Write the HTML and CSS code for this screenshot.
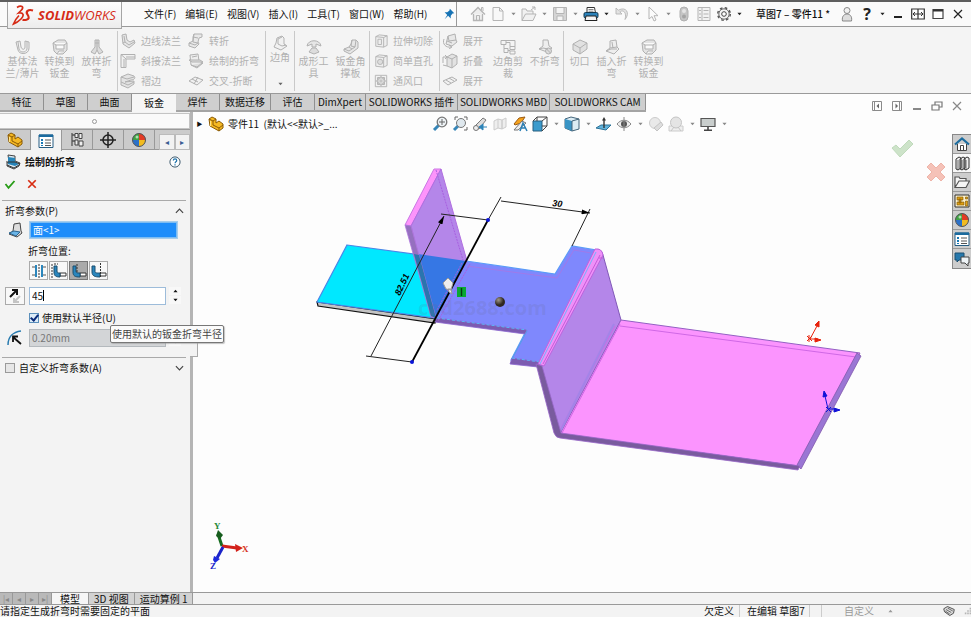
FILE: index.html
```html
<!DOCTYPE html>
<html lang="zh-CN">
<head>
<meta charset="utf-8">
<title>SOLIDWORKS</title>
<link rel="stylesheet" href="styles.css">
</head>
<body>
<svg class="sprite" aria-hidden="true">
  <symbol id="caret" viewBox="0 0 6 4"><path d="M0.5 0.5h5L3 3.5z" fill="currentColor"/></symbol>
  <symbol id="pin" viewBox="0 0 16 16"><path d="M9 2l5 5-2 .5-2 2.500 0 3-3-3-4 4 3-5-3-3 3 0 2.500-2z" fill="#1673b5"/></symbol>
  <symbol id="home" viewBox="0 0 16 16"><path d="M3.500 8v6.500h9V8M1 8.500l7-7 7 7" fill="#ededed" stroke="currentColor" stroke-width="1.300"/><path d="M6.500 14V9.500h3V14M11.500 4V1.500h1.500V5" fill="none" stroke="currentColor"/></symbol>
  <symbol id="doc" viewBox="0 0 16 16"><path d="M3 1.500h6.500L13 5v9.500H3zM9.500 1.500V5H13" fill="#f8f8f8" stroke="currentColor"/></symbol>
  <symbol id="open" viewBox="0 0 16 16"><path d="M1 14.500V3h4l1 2h6v3M1 14.500L4.500 8H15l-3 6.500zM10 4l4-3M11 1h3v3" fill="#f1f1f1" stroke="currentColor"/></symbol>
  <symbol id="save" viewBox="0 0 16 16"><path d="M1.500 1.500h13v13h-13z" fill="#d5d5d5" stroke="currentColor"/><path d="M4 1.500h8v6H4zM5 10h6v4.500H5z" fill="#f4f4f4" stroke="currentColor"/></symbol>
  <symbol id="print" viewBox="0 0 16 16"><path d="M4 7V1.500h7.500L12.500 7" fill="#fff" stroke="#333"/><rect x="1" y="6.500" width="14" height="5.500" rx="1.500" fill="#2b82ba" stroke="#14394f"/><path d="M3 10h10l1 4.500H2z" fill="#f5f5f5" stroke="#222"/><path d="M5.500 3.500h5M5.500 5.200h5" stroke="#666" stroke-width=".8"/></symbol>
  <symbol id="undo" viewBox="0 0 16 16"><path d="M2 2v6h6L5.800 5.800C9 3.500 13 6 11 13.500 16.500 7 12 0 4.300 4.200z" fill="#e3e3e3" stroke="currentColor" stroke-width=".9"/></symbol>
  <symbol id="cursor" viewBox="0 0 16 16"><path d="M4 1v12l3-2.500 2 4.500 2-1-2-4.300h4z" fill="#fbfbfb" stroke="currentColor"/></symbol>
  <symbol id="traffic" viewBox="0 0 16 16"><rect x="4" y="1" width="8" height="14" rx="4" fill="#c4c4c4" stroke="#b0b0b0"/><circle cx="8" cy="5" r="2" fill="#e4e4e4"/><circle cx="8" cy="10.500" r="2" fill="#a4a4a4"/></symbol>
  <symbol id="list" viewBox="0 0 16 16"><path d="M2 1.500h12v13H2zM6 1.500v13M3 4.500h2M3 8h2M3 11.500h2M7.500 4.500h5M7.500 8h5M7.500 11.500h5" fill="#f2f2f2" stroke="currentColor"/></symbol>
  <symbol id="gear" viewBox="0 0 16 16"><circle cx="8" cy="8" r="6.300" fill="none" stroke="#555" stroke-width="1.400" stroke-dasharray="2.600 2.350"/><circle cx="8" cy="8" r="5.200" fill="#f5f5f5" stroke="#555" stroke-width=".9"/><circle cx="8" cy="8" r="2.300" fill="#fff" stroke="#444"/></symbol>
  <symbol id="user" viewBox="0 0 16 16"><circle cx="8" cy="4.500" r="3" fill="#f1f1f1" stroke="#888"/><path d="M3.500 15c-1-5 2-7 4.500-7s5.500 2 4.500 7z" fill="#ddd" stroke="#888"/></symbol>
  <symbol id="bend" viewBox="0 0 16 16"><path d="M2 2l4-1 1 6 3 2 4-2 1 3-6 5-6-4z" fill="#e6e6e6" stroke="currentColor"/><path d="M4 3l1 6 4 3 5-3M5 9l-2 1" fill="none" stroke="currentColor"/></symbol>
  <symbol id="gusset" viewBox="0 0 16 16"><path d="M9 1h4l2 2v6l-8 6-6-3v-2l5-2 2-3z" fill="#e6e6e6" stroke="currentColor"/><path d="M13 1l-1 7-6 4-5-2M9 1L8 7l4 1M6 8l3 2" fill="none" stroke="currentColor"/></symbol>
  <symbol id="ushape" viewBox="0 0 16 16"><path d="M1 3l4-1 1 6c1 3 4 3 4 0V2l4 1v6c0 7-10 7-11 2z" fill="#f3f3f3" stroke="currentColor"/><path d="M3 3l1 7c1 4 7 4 8 0V3" fill="none" stroke="currentColor"/></symbol>
  <symbol id="convert" viewBox="0 0 16 16"><path d="M1 4l5-3h7l2 3v7l-4 4H5l-3-3z" fill="#e3e3e3" stroke="currentColor"/><path d="M1 4l3 2h8l3-2M4 6v4h8V6M5 15l2-3h5" fill="#fafafa" stroke="currentColor"/></symbol>
  <symbol id="loft" viewBox="0 0 16 16"><path d="M6 1h4v7l4 5-4 2-2-4-2 4-4-2 4-5z" fill="#ddd" stroke="currentColor"/><path d="M8 1v10M6 4h4" stroke="currentColor"/></symbol>
  <symbol id="miter" viewBox="0 0 16 16"><path d="M1 1.500h14V6H6v8.500H1zM1 1.500L6 6M4 6v8M6 4h9" fill="#f1f1f1" stroke="currentColor"/></symbol>
  <symbol id="hem" viewBox="0 0 16 16"><path d="M1 4l7-3 6 2c2 2 0 4-3 4L5 9l9-1v3l-6 4-7-3z" fill="#e3e3e3" stroke="currentColor"/><path d="M1 4l6 2 7-2M1 9l7 3 6-3" fill="none" stroke="currentColor"/></symbol>
  <symbol id="jog" viewBox="0 0 16 16"><path d="M6 1h8v3l-3 1-1 4 1 2-4 4-6-2v-3l4-2z" fill="#e8e8e8" stroke="currentColor"/><path d="M6 1l-1 3 5 1M5 4v5l5 1M1 10l6 2 3-2" fill="none" stroke="currentColor"/></symbol>
  <symbol id="unfold" viewBox="0 0 16 16"><path d="M6 3l7-2 1 6 1 2-5 4-6-2z" fill="#e8e8e8" stroke="currentColor"/><path d="M6 3l1 5 7-1M2 6c-2 5 2 9 7 8M7 12l3 2-3 2M5 8l5 2" fill="none" stroke="currentColor"/></symbol>
  <symbol id="fold" viewBox="0 0 16 16"><path d="M5 4l5-3 5 2v8l-5 4-5-2z" fill="#e2e2e2" stroke="currentColor"/><path d="M5 4l5 2v9M10 6l5-3M1 10V4h4M3 2l2 2-2 2M1 12l4 1" fill="none" stroke="currentColor"/></symbol>
  <symbol id="sketchbend" viewBox="0 0 16 16"><path d="M2 2l8-1 1 7 4 2-6 5-6-3z" fill="#eee" stroke="currentColor"/><path d="M1 7h11l3 2H4zM3 12l6 2 5-4M4 4l5-1" fill="#ddd" stroke="currentColor"/></symbol>
  <symbol id="cross" viewBox="0 0 16 16"><path d="M1 8l6-4 8 3-6 5zM4 6l6 3M6 11l4-7" fill="#f1f1f1" stroke="currentColor"/></symbol>
  <symbol id="corner" viewBox="0 0 16 16"><path d="M4 8l1-5 5-2 2 2v6l3 2-6 4-7-3z" fill="#f1f1f1" stroke="currentColor"/><path d="M6 9V4l4-2M6 9l4 2 4-1" fill="none" stroke="currentColor"/></symbol>
  <symbol id="form" viewBox="0 0 16 16"><path d="M1 7c1-7 13-7 14 0l-5-2v3H6V5z" fill="#e6e6e6" stroke="currentColor"/><path d="M6 9h4l3 4-5 2-5-2z" fill="#ddd" stroke="currentColor"/></symbol>
  <symbol id="cut" viewBox="0 0 16 16"><path d="M2 3l4-2 9 1v11l-4 2-9-1z" fill="#eee" stroke="currentColor"/><path d="M2 3l9 1v11M11 4l4-2M4.500 6h4v6h-4z" fill="none" stroke="currentColor"/></symbol>
  <symbol id="hole" viewBox="0 0 16 16"><path d="M2 3l4-2 9 1v11l-4 2-9-1z" fill="#eee" stroke="currentColor"/><path d="M2 3l9 1v11M11 4l4-2" fill="none" stroke="currentColor"/><circle cx="7" cy="9" r="3" fill="#ddd" stroke="currentColor"/></symbol>
  <symbol id="vent" viewBox="0 0 16 16"><path d="M1.500 1.500h13v13h-13z" fill="#f1f1f1" stroke="currentColor"/><circle cx="8" cy="8" r="4.500" fill="none" stroke="currentColor"/><path d="M4 4h2v2H4zM10 4h2v2h-2zM4 10h2v2H4zM10 10h2v2h-2zM8 2v12M2 8h12" fill="#ccc" stroke="currentColor"/></symbol>
  <symbol id="flat" viewBox="0 0 16 16"><path d="M1 8l9-4 5 3-9 5zM4 7l5 3M7 5l5 3" fill="#f1f1f1" stroke="currentColor"/></symbol>
  <symbol id="trim" viewBox="0 0 16 16"><path d="M1 1.500h5v4H1zM6 1.500h9v6M4 5.500v4M4 9.500h4v4H4zM8 11.500h2M10 7.500h5v3h-5zM10 12h5v3h-5zM6 3.500h4v4" fill="none" stroke="currentColor"/></symbol>
  <symbol id="unbend" viewBox="0 0 16 16"><path d="M6 1h5l1 6 3 2-5 4-8-3 4-3z" fill="#eee" stroke="currentColor"/><circle cx="11.500" cy="12" r="3" fill="#ddd" stroke="currentColor"/><path d="M9.500 10l4 4M2 10l4-1 5 1" stroke="currentColor" fill="none"/></symbol>
  <symbol id="insbend" viewBox="0 0 16 16"><path d="M6 2l6-1 1 7 2 2-5 5-8-3 4-3z" fill="#eee" stroke="currentColor"/><path d="M2 12l5-2 6 0M6 9l7-1M8 3l1 6" fill="none" stroke="currentColor"/></symbol>
  <symbol id="rip" viewBox="0 0 16 16"><path d="M1 5l7-4 7 3v6l-7 5-7-4z" fill="#e1e1e1" stroke="currentColor"/><path d="M1 5l7 4 7-5M8 9v6" fill="none" stroke="currentColor"/></symbol>
  <symbol id="part" viewBox="0 0 16 16"><path d="M1 3l3-2 4 2v4l3-2 4 3v4l-4 3-9-5z" fill="#f6b923" stroke="#8a5b06"/><path d="M1 3l4 2v4l6 3 4-3M5 5l3-2M11 12v3" fill="none" stroke="#8a5b06"/><path d="M2.500 5v5" stroke="#ffe48a"/></symbol>
  <symbol id="props" viewBox="0 0 16 16"><path d="M1 2h14v12.500H1z" fill="#fff" stroke="#265d82"/><path d="M1 1.500h14V4H1z" fill="#1a6a9e"/><path d="M3 6h2v2H3zM3 9h2v2H3zM3 12h2v1H3z" fill="#1878b5"/><path d="M7 7h6M7 10h6M7 12.500h6" stroke="#555"/></symbol>
  <symbol id="config" viewBox="0 0 16 16"><path d="M3 1v13M3 3h3M3 9h3" fill="none" stroke="#555" stroke-width="1.300"/><path d="M6 1.500h3v4H6zM10 1.500h3v5h-3zM6 8h3v5H6zM10 9h4v5h-4z" fill="#eee" stroke="#444"/></symbol>
  <symbol id="target" viewBox="0 0 16 16"><circle cx="8" cy="8" r="5" fill="none" stroke="#222" stroke-width="1.500"/><path d="M8 0v16M0 8h16" stroke="#222" stroke-width="1.500"/></symbol>
  <symbol id="ball" viewBox="0 0 16 16"><circle cx="8" cy="8" r="6.500" fill="#2c71c8"/><path d="M8 8V1.500A6.500 6.500 0 0 0 1.500 8z" fill="#3fa342"/><path d="M8 8V1.500A6.500 6.500 0 0 1 14.500 8z" fill="#e23a24"/><path d="M8 8h6.500A6.500 6.500 0 0 1 8 14.500z" fill="#f2bb20"/><circle cx="8" cy="8" r="6.500" fill="none" stroke="#555"/><circle cx="6" cy="5" r="1.500" fill="#fff" opacity=".6"/></symbol>
  <symbol id="bendblue" viewBox="0 0 16 16"><path d="M3 1l7 1v5l5 2-1 3-5 3-7-3V9l2-1z" fill="#dce7ee" stroke="#444"/><path d="M3 3l7 1v4l4 2-4 2-7-2z" fill="#2784b8"/><path d="M2 11l7 3 5-3M1 8h9l5 2" fill="none" stroke="#333"/></symbol>
  <symbol id="face" viewBox="0 0 16 16"><path d="M7 2l6-1 1 8 1 2-5 4-8-3 4-3z" fill="#ddd" stroke="#444"/><path d="M2 11l5-2 6 1-4 4z" fill="#6ab5e8" stroke="#2b6590"/></symbol>
  <symbol id="help" viewBox="0 0 16 16"><circle cx="8" cy="8" r="6.800" fill="#fff" stroke="#3a566b" stroke-width="1.300"/><path d="M5.800 6c0-3 4.500-3 4.500 0 0 1.700-2.200 1.700-2.200 3.500M8 11v1.500" fill="none" stroke="#1d72ac" stroke-width="1.600"/></symbol>
  <symbol id="check" viewBox="0 0 16 16"><path d="M2 8l4 5 8-9" fill="none" stroke="#279c16" stroke-width="2.400"/></symbol>
  <symbol id="cancel" viewBox="0 0 16 16"><path d="M3 3l10 10M13 3L3 13" fill="none" stroke="#d82c12" stroke-width="2.300"/></symbol>
  <symbol id="chev" viewBox="0 0 10 6"><path d="M1 5l4-4 4 4" fill="none" stroke="#444" stroke-width="1.300"/></symbol>
  <symbol id="pos1" viewBox="0 0 16 16"><path d="M1 4h4v8H1M15 4h-4v8h4" fill="none" stroke="#555"/><path d="M5 2v12M11 2v12" stroke="#2a86bd" stroke-width="2"/><path d="M8 1v14" stroke="#333" stroke-dasharray="2 1"/></symbol>
  <symbol id="pos2" viewBox="0 0 16 16"><path d="M9 10h6v3H9z" fill="#fff" stroke="#333"/><path d="M3 3h3v5c0 2 1 2 3 2v4c-4 0-6-1-6-5z" fill="#2a86bd" stroke="#1b4d6c"/><path d="M1 1v14M3 1h4" stroke="#333" stroke-dasharray="2 1"/></symbol>
  <symbol id="pos3" viewBox="0 0 16 16"><path d="M9 10h6v3H9z" fill="#fff" stroke="#333"/><path d="M2 3h3v5c0 2 1 2 4 2v4c-5 0-7-1-7-5z" fill="#2a86bd" stroke="#1b4d6c"/><path d="M6 1v8" stroke="#333" stroke-dasharray="2 1"/></symbol>
  <symbol id="pos4" viewBox="0 0 16 16"><path d="M9 10h6v3H9z" fill="#fff" stroke="#333"/><path d="M1 3h3v5c0 2 1 2 5 2v4c-5 0-8-1-8-5z" fill="#2a86bd" stroke="#1b4d6c"/><path d="M9.500 0v15" stroke="#333" stroke-dasharray="2 1"/></symbol>
  <symbol id="flip" viewBox="0 0 16 16"><path d="M3 9l6-6M5 2h5v5" fill="none" stroke="#111" stroke-width="2"/><path d="M13 8l-5 5M7 10v4h5" fill="none" stroke="#c4c4c4" stroke-width="2"/></symbol>
  <symbol id="radius" viewBox="0 0 16 16"><path d="M1 15C1 7 6 2 14 1" fill="none" stroke="#2a7cb0" stroke-width="1.500"/><path d="M14 14L6 7M6 12V6.500h5" fill="none" stroke="#111" stroke-width="1.800"/></symbol>
  <symbol id="zoomfit" viewBox="0 0 16 16"><path d="M7 9l-5 5" stroke="#3786b8" stroke-width="3"/><circle cx="10" cy="6" r="4.800" fill="#eef3f6" stroke="#777" stroke-width="1.300"/><path d="M10 3v6M7 6h6" stroke="#666"/></symbol>
  <symbol id="zoomarea" viewBox="0 0 16 16"><path d="M6 10l-4 4" stroke="#3786b8" stroke-width="3"/><circle cx="9" cy="7" r="4.500" fill="#dfe8ee" stroke="#777"/><path d="M3 4V1h3M12 1h3v3M15 11v3h-3" fill="none" stroke="#666"/></symbol>
  <symbol id="prev" viewBox="0 0 16 16"><path d="M2 11l9-9 3 2-7 9z" fill="#ddd" stroke="#777"/><circle cx="4" cy="12" r="2.500" fill="#eee" stroke="#777"/><path d="M15 11H9M11 8l-4 3 4 3z" fill="#2d83b8" stroke="#2d83b8"/></symbol>
  <symbol id="section" viewBox="0 0 16 16"><path d="M2 5l4-2v9l-4 2zM6 3l4 1v9l-4-1M10 4l4-2v9l-4 2z" fill="#eee" stroke="#ccc"/></symbol>
  <symbol id="annot" viewBox="0 0 16 16"><path d="M2 8l5-6 6-1-4 6-6 2z" fill="#f5a21c" stroke="#9b5b12"/><path d="M2 14l8-9 4 2-8 7z" fill="#eee" stroke="#777"/><path d="M8 15l3-8 4 8M9 12h4" fill="none" stroke="#2b7fb5" stroke-width="1.500"/></symbol>
  <symbol id="view" viewBox="0 0 16 16"><path d="M1 5h9v10H1z" fill="#3b9bcd" stroke="#285f7e"/><path d="M1 5l4-4h10v9l-5 5M10 5l5-4M5 1v4M10 10h5" fill="none" stroke="#444"/></symbol>
  <symbol id="shade" viewBox="0 0 16 16"><path d="M1 3l6-2 8 2v10l-7 2-7-3z" fill="#dcecf4" stroke="#44657a"/><path d="M1 3l7 2v10l-7-3z" fill="#3994c5"/><path d="M8 5v10M8 5l7-2" stroke="#44657a" fill="none"/></symbol>
  <symbol id="normal" viewBox="0 0 16 16"><path d="M0 12l5-3h10l-5 5z" fill="#61b3dc" stroke="#2d7296"/><path d="M8 12V3" stroke="#333" stroke-width="1.400"/><path d="M6 4.500L8 1l2 3.500z" fill="#333"/></symbol>
  <symbol id="eye" viewBox="0 0 16 16"><path d="M1 8c4-5 10-5 14 0-4 5-10 5-14 0z" fill="#eee" stroke="#888"/><circle cx="8" cy="8" r="3" fill="#555"/><path d="M8 1v14" stroke="#888"/></symbol>
  <symbol id="appear" viewBox="0 0 16 16"><circle cx="7" cy="7" r="5.500" fill="#e9e9e9" stroke="#ccc"/><path d="M6 12l7-6 2 3-6 6z" fill="#ddd" stroke="#c4c4c4"/></symbol>
  <symbol id="scene" viewBox="0 0 16 16"><path d="M1 10h14v5H1z" fill="#eee" stroke="#ccc"/><circle cx="8" cy="6.500" r="5.500" fill="#e4e4e4" stroke="#c4c4c4"/><path d="M3 15l3-4M13 15l-3-4" stroke="#c4c4c4"/></symbol>
  <symbol id="monitor" viewBox="0 0 16 16"><path d="M1 2.500h14v8H1z" fill="#c9cecd" stroke="#555" stroke-width="1.200"/><path d="M8 11v3M4 14.300h8" stroke="#444" stroke-width="1.600"/></symbol>
  <symbol id="paneL" viewBox="0 0 12 12"><path d="M1.500 1.500h9v9h-9zM3.500 1.500v9" fill="none" stroke="#8a8a8a"/><path d="M8 3.500v5L5.500 6z" fill="#666"/></symbol>
  <symbol id="paneR" viewBox="0 0 12 12"><path d="M1.500 1.500h9v9h-9zM8.500 1.500v9" fill="none" stroke="#8a8a8a"/><path d="M4.500 3.500v5L7 6z" fill="#666"/></symbol>
  <symbol id="min" viewBox="0 0 12 12"><path d="M2 9h8" stroke="currentColor" stroke-width="2"/></symbol>
  <symbol id="restore" viewBox="0 0 12 12"><path d="M1 5h7v5H1zM4 5V2h7v5H8" fill="none" stroke="#777" stroke-width="1.200"/></symbol>
  <symbol id="close" viewBox="0 0 12 12"><path d="M2 2l8 8M10 2l-8 8" stroke="currentColor" stroke-width="1.200"/></symbol>
  <symbol id="span" viewBox="0 0 14 12"><path d="M.7 1h12.600v10H.7zM7 1v10" fill="#fff" stroke="#333" stroke-width="1.200"/><path d="M2 6h10M4 4L2 6l2 2M10 4l2 2-2 2" fill="none" stroke="#333"/></symbol>
  <symbol id="max" viewBox="0 0 12 12"><path d="M1 1.500h10v9H1z" fill="#fff" stroke="#444" stroke-width="1.200"/><path d="M1 2.500h10" stroke="#333" stroke-width="2"/></symbol>
  <symbol id="books" viewBox="0 0 16 16"><path d="M2 4l3-2 2 1v10l-3 2-2-1zM6 4l3-2 2 1v10l-3 2-2-1zM10 4l3-2 2 1v10l-3 2-2-1z" fill="#eee" stroke="#333"/><path d="M4 5v10M8 5v10M12 5v10" stroke="#333" stroke-width=".7"/></symbol>
  <symbol id="homeblue" viewBox="0 0 16 16"><path d="M3.500 8v6.500h9V8" fill="#fff" stroke="#444"/><path d="M1 8.500l7-6 7 6" fill="none" stroke="#1c6c9e" stroke-width="2.200"/><path d="M6.500 14V9.500h3V14" fill="none" stroke="#444"/></symbol>
  <symbol id="folder" viewBox="0 0 16 16"><path d="M1 13.500V3h4l1 1.500h6V7M1 13.500L5 7h10.500L12 13.500z" fill="#f5f5f5" stroke="#555" stroke-width="1.200"/></symbol>
  <symbol id="palette" viewBox="0 0 16 16"><path d="M1 2h14v12H1z" fill="#fff3cc" stroke="#333"/><path d="M3 4h6v3H3zM3 9h7v3H3zM5 6h2v4H5zM11.500 4h2v2h-2zM11.500 8h2v5h-2z" fill="#e0a010" stroke="#765006" stroke-width=".6"/></symbol>
  <symbol id="chat" viewBox="0 0 16 16"><path d="M1 2h9v7H5l-2 2V9H1z" fill="#2678ac" stroke="#1b4e70"/><path d="M7 6h8v6h-1v3l-3-3H7z" fill="#eef3f6" stroke="#444"/></symbol>
  <symbol id="tag" viewBox="0 0 16 16"><path d="M1 5l5-3 9 4-1 5-5 3-7-5z" fill="#ddd" stroke="#444" stroke-width="1.200"/><path d="M4 6l7 4M6 4l7 4M3 8l6 4" stroke="#444"/></symbol>
  <symbol id="grip" viewBox="0 0 10 10"><path d="M7 1h2v2H7zM4 4h2v2H4zM7 4h2v2H7zM1 7h2v2H1zM4 7h2v2H4zM7 7h2v2H7z" fill="#b5b5b5"/></symbol>
</svg>

<div class="app">
  <header class="titlebar">
    <div class="logo">
      <svg class="ds" viewBox="0 0 24 22" aria-hidden="true"><path d="M5 3.500C9 1 13 2.500 9 6.500L6.500 9c5-1 6 2.500 2.500 6-2 2-5 4-7.500 5 1.500-3.500 3-6 5.500-8.500" fill="none" stroke="#d62b16" stroke-width="1.700"/><path d="M21 6.500c-5-1.500-7.500 1-5.500 4s1.500 4.500-1 5.200c-1.500.4-3 .3-4 0" fill="none" stroke="#d62b16" stroke-width="2.200"/></svg>
      <span class="brand"><b>SOLID</b>WORKS</span>
    </div>
    <nav class="menu">
      <button>文件(F)</button><button>编辑(E)</button><button>视图(V)</button><button>插入(I)</button><button>工具(T)</button><button>窗口(W)</button><button>帮助(H)</button>
    </nav>
    <button class="pin" aria-label="固定"><svg class="i14"><use href="#pin"/></svg></button>
    <div class="quick">
      <button class="ib" aria-label="主页"><svg class="i16"><use href="#home"/></svg></button>
      <button class="ib" aria-label="新建"><svg class="i16"><use href="#doc"/></svg></button><button class="cb" aria-label="新建选项"><svg><use href="#caret"/></svg></button>
      <button class="ib" aria-label="打开"><svg class="i16"><use href="#open"/></svg></button><button class="cb" aria-label="打开选项"><svg><use href="#caret"/></svg></button>
      <button class="ib" aria-label="保存"><svg class="i16"><use href="#save"/></svg></button><button class="cb" aria-label="保存选项"><svg><use href="#caret"/></svg></button>
      <button class="ib" aria-label="打印"><svg class="i16"><use href="#print"/></svg></button><button class="cb dark" aria-label="打印选项"><svg><use href="#caret"/></svg></button>
      <button class="ib" aria-label="撤消"><svg class="i16"><use href="#undo"/></svg></button><button class="cb" aria-label="撤消选项"><svg><use href="#caret"/></svg></button>
      <button class="ib" aria-label="选择"><svg class="i16"><use href="#cursor"/></svg></button><button class="cb" aria-label="选择选项"><svg><use href="#caret"/></svg></button>
      <button class="ib" aria-label="重建"><svg class="i16"><use href="#traffic"/></svg></button>
      <button class="ib" aria-label="文件属性"><svg class="i16"><use href="#list"/></svg></button>
      <button class="ib" aria-label="选项"><svg class="i16"><use href="#gear"/></svg></button><button class="cb dark" aria-label="更多选项"><svg><use href="#caret"/></svg></button>
    </div>
    <h1 class="doctitle">草图7 – 零件11 *</h1>
    <div class="winctl">
      <button class="ib" aria-label="登录"><svg class="i16"><use href="#user"/></svg></button>
      <button class="ib q">?</button><button class="cb dark" aria-label="帮助选项"><svg><use href="#caret"/></svg></button>
      <button class="ib" aria-label="最小化"><svg class="i12"><use href="#min"/></svg></button>
      <button class="ib" aria-label="跨屏"><svg class="i14"><use href="#span"/></svg></button>
      <button class="ib" aria-label="最大化"><svg class="i12"><use href="#max"/></svg></button>
      <button class="ib" aria-label="关闭"><svg class="i12"><use href="#close"/></svg></button>
    </div>
  </header>

  <section class="ribbon">
    <div class="grp g1">
      <button class="big"><svg class="i16"><use href="#ushape"/></svg>基体法<br>兰/薄片</button>
      <button class="big"><svg class="i16"><use href="#convert"/></svg>转换到<br>钣金</button>
      <button class="big"><svg class="i16"><use href="#loft"/></svg>放样折<br>弯</button>
    </div>
    <div class="grp g2">
      <div class="rows">
        <button><svg class="i16"><use href="#bend"/></svg>边线法兰</button>
        <button><svg class="i16"><use href="#miter"/></svg>斜接法兰</button>
        <button><svg class="i16"><use href="#hem"/></svg>褶边</button>
      </div>
      <div class="rows">
        <button><svg class="i16"><use href="#jog"/></svg>转折</button>
        <button><svg class="i16"><use href="#sketchbend"/></svg>绘制的折弯</button>
        <button><svg class="i16"><use href="#cross"/></svg>交叉-折断</button>
      </div>
    </div>
    <div class="grp g3">
      <button class="big tall"><svg class="i16"><use href="#corner"/></svg>边角<svg class="car"><use href="#caret"/></svg></button>
    </div>
    <div class="grp g4">
      <button class="big"><svg class="i16"><use href="#form"/></svg>成形工<br>具</button>
      <button class="big"><svg class="i16"><use href="#gusset"/></svg>钣金角<br>撑板</button>
    </div>
    <div class="grp g5">
      <div class="rows">
        <button><svg class="i14"><use href="#cut"/></svg>拉伸切除</button>
        <button><svg class="i14"><use href="#hole"/></svg>简单直孔</button>
        <button><svg class="i14"><use href="#vent"/></svg>通风口</button>
      </div>
    </div>
    <div class="grp g6">
      <div class="rows">
        <button><svg class="i16"><use href="#unfold"/></svg>展开</button>
        <button><svg class="i16"><use href="#fold"/></svg>折叠</button>
        <button><svg class="i16"><use href="#flat"/></svg>展开</button>
      </div>
      <button class="big"><svg class="i16"><use href="#trim"/></svg>边角剪<br>裁</button>
      <button class="big"><svg class="i16"><use href="#unbend"/></svg>不折弯</button>
    </div>
    <div class="grp g7">
      <button class="big"><svg class="i16"><use href="#rip"/></svg>切口</button>
      <button class="big"><svg class="i16"><use href="#insbend"/></svg>插入折<br>弯</button>
      <button class="big"><svg class="i16"><use href="#convert"/></svg>转换到<br>钣金</button>
    </div>
  </section>

  <div class="tabrow">
    <nav class="tabs">
      <button>特征</button><button>草图</button><button>曲面</button><button class="on">钣金</button><button>焊件</button><button class="m">数据迁移</button><button>评估</button><button class="m">DimXpert</button><button class="l">SOLIDWORKS 插件</button><button class="l">SOLIDWORKS MBD</button><button class="l xl">SOLIDWORKS CAM</button>
    </nav>
    <div class="docctl">
      <button class="ib" aria-label="左窗格"><svg class="i12"><use href="#paneL"/></svg></button>
      <button class="ib" aria-label="右窗格"><svg class="i12"><use href="#paneR"/></svg></button>
      <button class="ib" aria-label="最小化文档"><svg class="i12"><use href="#min"/></svg></button>
      <button class="ib" aria-label="还原文档"><svg class="i12"><use href="#restore"/></svg></button>
      <button class="ib" aria-label="关闭文档"><svg class="i12"><use href="#close"/></svg></button>
    </div>
  </div>

  <main class="work">
    <aside class="panel">
      <div class="grab"><i></i></div>
      <nav class="ptabs">
        <button aria-label="设计树"><svg class="i16"><use href="#part"/></svg></button>
        <button class="on" aria-label="属性"><svg class="i16"><use href="#props"/></svg></button>
        <button aria-label="配置"><svg class="i16"><use href="#config"/></svg></button>
        <button aria-label="尺寸专家"><svg class="i16"><use href="#target"/></svg></button>
        <button aria-label="外观"><svg class="i16"><use href="#ball"/></svg></button>
        <span class="pnav"><button aria-label="向左">◂</button><button aria-label="向右">▸</button></span>
      </nav>
      <div class="ptitle"><svg class="i16"><use href="#bendblue"/></svg><h2>绘制的折弯</h2><button aria-label="帮助"><svg class="i12"><use href="#help"/></svg></button></div>
      <div class="okrow"><button aria-label="确定"><svg class="i12"><use href="#check"/></svg></button><button aria-label="取消"><svg class="i12"><use href="#cancel"/></svg></button></div>
      <section class="params">
        <div class="sechead"><h3>折弯参数(P)</h3><svg class="chev"><use href="#chev"/></svg></div>
        <div class="prow"><span class="lead"><svg class="i16"><use href="#face"/></svg></span><input class="sel" aria-label="固定面" value="面&lt;1&gt;"></div>
        <p class="lab">折弯位置:</p>
        <div class="pos">
          <button aria-label="折弯中心线"><svg class="i16"><use href="#pos1"/></svg></button><button aria-label="材料在内"><svg class="i16"><use href="#pos2"/></svg></button><button class="on" aria-label="材料在外"><svg class="i16"><use href="#pos3"/></svg></button><button aria-label="折弯在外"><svg class="i16"><use href="#pos4"/></svg></button>
        </div>
        <div class="prow angle"><button class="flip" aria-label="反向"><svg class="i16"><use href="#flip"/></svg></button><span class="field"><input class="txt" aria-label="角度" value="45"><i class="textcaret"></i></span><span class="spin"><button aria-label="增大"><svg class="up"><use href="#caret"/></svg></button><button aria-label="减小"><svg><use href="#caret"/></svg></button></span></div>
        <label class="chk in"><input type="checkbox" checked><span>使用默认半径(U)</span></label>
        <div class="prow"><span class="lead"><svg class="i16"><use href="#radius"/></svg></span><input class="txt" aria-label="半径" value="0.20mm" disabled><span class="spin"><button aria-label="增大半径"><svg class="up"><use href="#caret"/></svg></button><button aria-label="减小半径"><svg><use href="#caret"/></svg></button></span></div>
      </section>
      <section class="custom">
        <label class="chk"><input type="checkbox"><span>自定义折弯系数(A)</span></label><svg class="chev down"><use href="#chev"/></svg>
      </section>
      <div class="tip" role="tooltip">使用默认的钣金折弯半径</div>
      <i class="handle"></i>
    </aside>

    <section class="view">
      <svg class="scene" viewBox="193 112 778 480" role="img" aria-label="钣金零件模型">
        <defs>
          <marker id="arr" viewBox="0 0 10 6" refX="10" refY="3" markerWidth="9" markerHeight="5" markerUnits="userSpaceOnUse" orient="auto-start-reverse"><path d="M0 0l10 3-10 3z"/></marker>
          <radialGradient id="sph" cx=".35" cy=".3"><stop offset="0" stop-color="#a09888"/><stop offset="1" stop-color="#302820"/></radialGradient>
        </defs>
        <path d="M317 302L436 319l-1 4-117-17z" fill="#c3c3c3" stroke="#111" stroke-width="1.200"/>
        <path d="M347 245l119 16-31 57-118-16z" fill="#00e8ff" stroke="#4a86e8" stroke-width="1.200"/>
        <path d="M466 261l89 13 17-28 24 4-56 113-29-3 15-29-91-12z" fill="#7f88fd" stroke="#5b9cf8" stroke-width="1.200"/>
        <path d="M467 266l90 12 17-28 17 3" fill="none" stroke="#a07ae8"/>
        <path d="M437 318l90 12-2 4-90-12zM512 358l28 4-2 5-28-3z" fill="#7c5bb0" stroke="#8a65cf" stroke-width=".8"/>
        <path d="M437 318l90 12M512 358l28 4" stroke="#5ab6f4" stroke-dasharray="3 2"/>
        <path d="M527 331l-15 28" stroke="#579be9"/>
        <path d="M434 169l7 0-30 57-6-1z" fill="#fd94fb" stroke="#c978e4"/>
        <path d="M441 169l26 92-32 57-24-92z" fill="#b486e9" stroke="#b06ee0"/>
        <path d="M418 254l48 7-31 57z" fill="#3677e4"/>
        <path d="M405 225l6 1 25 92-5-1z" fill="#9570bf" stroke="#ae76dc" stroke-width=".8"/>
        <path d="M414 254l5 1 17 63-5-2z" fill="#2a75ae"/>
        <path d="M436 170l27 90M462 263l-25 47M470 264l-32 57" fill="none" stroke="#a85fe0" stroke-dasharray="2 1"/>
        <path d="M595 250q6-2 8 5L621 320 560 437 539 364z" fill="#b486e9" stroke="#8159b8"/>
        <path d="M595 249q7-1 8 6L544 366l-6-2z" fill="#ef91f8" stroke="#bd63dd"/>
        <path d="M596 252l-56 112" stroke="#72b4fa"/>
        <path d="M600 255l-57 109M599 258h4" stroke="#c55ad9"/>
        <path d="M621 320l239 33-61 113-239-32z" fill="#fb94fe" stroke="#9360c3"/>
        <path d="M620 326l236 31M620 324l-58 109M615 326l-56 106" fill="none" stroke="#cf68e5"/>
        <path d="M614 324l-53 106" stroke="#a384e8" stroke-width="2"/>
        <path d="M857 353l4 3-60 113-4-4z" fill="#9a76d4" stroke="#8058ac" stroke-width=".8"/>
        <path d="M536 364l6 2 19 67 239 33-2 4-238-32q-4 0-6-5z" fill="#795b9e" stroke="#9867c8" stroke-width=".8"/>
        <text class="mark" x="418" y="315">cad2688.com</text>
        <path d="M488 220L412 362" stroke="#000" stroke-width="1.800"/>
        <path d="M488 220l-47-6M412 362l-46-6M488 220l13-23M590 209l-18 37" stroke="#222" fill="none"/>
        <path d="M444 216L371 356M501 201l89 12" stroke="#222" marker-start="url(#arr)" marker-end="url(#arr)"/>
        <text class="dimtext" transform="translate(552 206) rotate(7)">30</text>
        <text class="dimtext" transform="translate(400 296) rotate(-65)">82.51</text>
        <circle cx="488" cy="220" r="2" fill="#0a14d8"/><circle cx="412" cy="362" r="2" fill="#0a14d8"/>
        <path d="M443 283l5-5 5 5-2 7-5-1zM448 289h3l1 5-3-2z" fill="#eee" stroke="#999"/>
        <path d="M457 287h9v10h-9z" fill="#0aa832"/><path d="M461.500 288v8" stroke="#063b12" stroke-width="1.400"/>
        <circle cx="500" cy="302" r="5" fill="url(#sph)"/>
        <g fill="#e8230c" stroke="#e8230c"><path d="M810 339l7-13M810 339h8" fill="none"/><path d="M819 321l0 6-4-2zM821 340l-6 2v-4z"/><path d="M807 336l5 5M807 341l5-5M809 335v7"/></g>
        <g fill="#1012d8" stroke="#1012d8"><path d="M828 409l-3-13M828 409h7" fill="none"/><path d="M824 391l3 5-4 1zM840 410l-6 2v-4z"/><path d="M826 407l5 5M826 412l5-5"/></g>
        <g fill="none" stroke-width="3"><path d="M222 546l-4-12" stroke="#176d20"/><path d="M222 546l15 2" stroke="#d3221b"/><path d="M223 547l-6 11" stroke="#1b24c9"/></g>
        <path d="M216 536l2-6 5 5-3 4z" fill="#175d1e"/><path d="M235 544l8 4-7 4z" fill="#d3221b"/><path d="M214 556l6 3-5 4-2-3z" fill="#1d28dc"/>
        <g class="axis"><text x="214" y="529" fill="#278a38">Y</text><text x="242" y="552" fill="#d63324">X</text><text x="210" y="569" fill="#1b24c9">Z</text></g>
      </svg>
      <button class="tree"><span>▶</span><svg class="i16"><use href="#part"/></svg>零件11&nbsp; (默认&lt;&lt;默认&gt;_...</button>
      <div class="hud">
        <button class="ib" aria-label="整屏显示"><svg class="i16"><use href="#zoomfit"/></svg></button>
        <button class="ib" aria-label="局部放大"><svg class="i16"><use href="#zoomarea"/></svg></button>
        <button class="ib" aria-label="上一视图"><svg class="i16"><use href="#prev"/></svg></button>
        <button class="ib" aria-label="剖面视图"><svg class="i16"><use href="#section"/></svg></button>
        <button class="ib" aria-label="动态注解"><svg class="i16"><use href="#annot"/></svg></button>
        <button class="ib" aria-label="视图定向"><svg class="i16"><use href="#view"/></svg></button><button class="cb" aria-label="定向选项"><svg><use href="#caret"/></svg></button>
        <button class="ib" aria-label="显示样式"><svg class="i16"><use href="#shade"/></svg></button><button class="cb" aria-label="样式选项"><svg><use href="#caret"/></svg></button>
        <button class="ib" aria-label="正视于"><svg class="i16"><use href="#normal"/></svg></button>
        <button class="ib" aria-label="显示隐藏"><svg class="i16"><use href="#eye"/></svg></button><button class="cb" aria-label="显示选项"><svg><use href="#caret"/></svg></button>
        <button class="ib" aria-label="编辑外观"><svg class="i16"><use href="#appear"/></svg></button>
        <button class="ib" aria-label="应用布景"><svg class="i16"><use href="#scene"/></svg></button><button class="cb" aria-label="布景选项"><svg><use href="#caret"/></svg></button>
        <button class="ib" aria-label="视图设置"><svg class="i16"><use href="#monitor"/></svg></button><button class="cb" aria-label="设置选项"><svg><use href="#caret"/></svg></button>
      </div>
      <div class="confirm">
        <button aria-label="确认"><svg viewBox="0 0 24 20"><path d="M2 10l4-3 4 4L19 2l4 4-13 13z" fill="#cde3c9" stroke="#c0dabc"/></svg></button>
        <button class="no" aria-label="放弃"><svg viewBox="0 0 20 20"><path d="M1 5l4-4 5 5 5-5 4 4-5 5 5 5-4 4-5-5-5 5-4-4 5-5z" fill="#f5c2b8" stroke="#eeb4a8"/></svg></button>
      </div>
      <nav class="taskpane">
        <button aria-label="资源"><svg class="i16"><use href="#homeblue"/></svg></button>
        <button class="on" aria-label="设计库"><svg class="i16"><use href="#books"/></svg></button>
        <button aria-label="文件探索器"><svg class="i16"><use href="#folder"/></svg></button>
        <button aria-label="视图调色板"><svg class="i16"><use href="#palette"/></svg></button>
        <button aria-label="外观和布景"><svg class="i16"><use href="#ball"/></svg></button>
        <button aria-label="自定义属性"><svg class="i16"><use href="#props"/></svg></button>
        <button aria-label="论坛"><svg class="i16"><use href="#chat"/></svg></button>
      </nav>
    </section>
  </main>

  <nav class="sheets">
    <div class="vcr"><button aria-label="第一个">|◂</button><button aria-label="上一个">◂</button><button aria-label="下一个">▸</button><button aria-label="最后">▸|</button></div>
    <button class="on">模型</button><button>3D 视图</button><button>运动算例 1</button>
  </nav>
  <footer class="status">
    <span class="msg">请指定生成折弯时需要固定的平面</span>
    <span class="cell s1">欠定义</span><span class="cell s2">在编辑 草图7</span><span class="cell s3"></span><span class="cell s4">自定义 <svg class="up"><use href="#caret"/></svg></span><span class="cell s5"><svg class="tagicon"><use href="#tag"/></svg><svg class="grip"><use href="#grip"/></svg></span>
  </footer>
</div>
</body>
</html>
```
FILE: styles.css
```css
* { box-sizing: border-box; margin: 0; padding: 0; }
body { font: 10px/12px "Noto Sans CJK SC", "Noto Sans", sans-serif; color: #111; background: #f3f3f3; }
button { font: inherit; color: inherit; background: none; border: 0; white-space: nowrap; }
input { font: inherit; color: inherit; }
svg { display: block; flex: none; }
.sprite { position: absolute; width: 0; height: 0; }
.i12 { width: 12px; height: 12px; }
.i14 { width: 14px; height: 14px; }
.i16 { width: 16px; height: 16px; }
.app { display: flex; flex-direction: column; height: 100vh; overflow: hidden; }

/* shared icon and drop-arrow buttons */
.ib { width: 20px; height: 20px; display: flex; align-items: center; justify-content: center; flex: none; }
.cb { width: 11px; height: 20px; display: flex; align-items: center; justify-content: center; color: #888; flex: none; }
.cb svg { width: 5px; height: 4px; }
.cb.dark { color: #222; }

/* title bar */
.titlebar { display: flex; align-items: center; height: 27px; flex: none; border-top: 2px solid #5e5e5e; border-bottom: 1px solid #9a9a9a; background: #fafafa; }
.logo { position: relative; z-index: 2; align-self: flex-start; display: flex; align-items: center; width: 115px; height: 27px; margin-left: 7px; padding-left: 4px; flex: none; background: linear-gradient(#fff, #ececec); border: 1px solid #a5a5a5; border-top: 0; color: #d62b16; }
.ds { width: 24px; height: 22px; }
.brand { font: italic 13px/20px "Open Sans", sans-serif; padding-left: 2px; }
.menu { display: flex; gap: 9px; margin-left: 22px; }
.pin { margin-left: 14px; width: 16px; display: flex; justify-content: center; }
.quick { display: flex; align-items: center; margin-left: auto; padding-left: 11px; height: 24px; border-left: 1px solid #999; color: #b5b5b5; }
.doctitle { font-size: 10px; font-weight: 500; width: 100px; padding-left: 11px; white-space: nowrap; }
.winctl { display: flex; align-items: center; padding-right: 3px; color: #222; }
.q { font: bold 16px/20px "Open Sans", sans-serif; }

/* ribbon */
.ribbon { display: flex; height: 67px; flex: none; padding: 4px 0 2px; border-bottom: 1px solid #9a9a9a; color: #b1b1b1; background: #f4f4f4; }
.grp { display: flex; border-right: 1px solid #c9c9c9; flex: none; }
.grp:last-child { border-right: 0; }
.big { display: flex; flex-direction: column; align-items: center; justify-content: flex-start; width: 37px; padding-top: 8px; line-height: 12px; }
.tall { padding-top: 4px; width: 28px; }
.car { width: 5px; height: 4px; margin-top: 19px; color: #666; }
.rows { display: flex; flex-direction: column; }
.rows button { display: flex; align-items: center; gap: 5px; height: 20px; }
.g1 { width: 118px; padding-left: 4px; }
.g2 { width: 148px; padding-left: 2px; gap: 7px; }
.g3 { width: 29px; }
.g4 { width: 75px; }
.g5 { width: 70px; padding-left: 4px; }
.g6 { width: 124px; padding-left: 2px; }
.g6 .rows { width: 48px; }
.g7 { padding-left: 2px; }
.g7 .big:first-child { width: 27px; }

/* command tabs */
.tabrow { display: flex; justify-content: space-between; height: 18px; flex: none; background: #fdfdfd; }
.tabs { display: flex; background: #cfcfcf; border-bottom: 2px solid #a4a4a4; }
.tabs button { width: 44px; border-right: 1px solid #909090; line-height: 16px; text-align: center; }
.tabs .m { width: 51px; }
.tabs .l { width: 92px; }
.tabs .xl { width: 96px; }
.tabs .on { background: #f6f6f6; height: 18px; border: 0; }
.docctl { display: flex; padding: 2px 4px 0 0; color: #888; }

/* work area */
.work { display: flex; flex: 1; min-height: 0; }
.panel { position: relative; width: 193px; flex: none; background: #f3f3f3; border-right: 3px solid #b5b5b5; }
.grab { height: 16px; margin-top: 1px; display: flex; align-items: center; justify-content: center; background: #fafafa; border: 1px solid #c4c4c4; border-left: 0; }
.grab i { width: 5px; height: 5px; border: 1px solid #999; border-radius: 50%; }
.ptabs { display: flex; height: 21px; background: #cbcbcb; border-top: 1px solid #999; border-bottom: 1px solid #999; }
.ptabs > button { width: 31px; display: flex; align-items: center; justify-content: center; border-right: 1px solid #999; }
.ptabs .on { background: #f3f3f3; height: 21px; }
.pnav { display: flex; flex: 1; margin: 4px 0 0 4px; }
.pnav button { flex: 1; height: 16px; background: #f2f2f2; border: 1px solid #bbb; color: #3b5d92; font-size: 8px; line-height: 12px; }
.ptitle { display: flex; align-items: center; height: 24px; padding: 0 9px 0 5px; gap: 4px; }
.ptitle h2 { flex: 1; font-size: 10px; font-weight: 700; }
.okrow { display: flex; gap: 10px; height: 26px; padding: 4px 0 0 4px; align-items: flex-start; }
.params { margin: 0 4px 0 2px; border-top: 1px solid #a9a9a9; padding-top: 3px; height: 157px; }
.sechead { display: flex; align-items: center; justify-content: space-between; padding: 0 2px 0 3px; height: 13px; }
.sechead h3 { font-size: 10px; font-weight: 400; }
.chev { width: 9px; height: 6px; }
.down { transform: scaleY(-1); }
.prow { display: flex; align-items: center; height: 19px; padding-left: 3px; margin-top: 3px; }
.lead, .flip { width: 20px; height: 18px; margin-right: 4px; display: flex; align-items: center; justify-content: center; flex: none; }
.flip { border: 1px solid #aaa; background: #f8f8f8; }
.sel { width: 149px; height: 18px; border: 2px solid #7cbcf3; outline: 1px solid #a8cdea; outline-offset: -1px; background: #1e8dfa; color: #fff; padding: 0 2px; }
.lab { padding: 6px 0 4px 26px; }
.pos { display: flex; gap: 1px; padding-left: 27px; }
.pos button { width: 19px; height: 19px; border: 1px solid #aaa; background: #f8f8f8; display: flex; align-items: center; justify-content: center; }
.pos .on { background: #aaa; border-color: #777; }
.angle { margin-top: 6px; }
.txt { width: 137px; height: 18px; border: 1px solid #9dbcda; background: #fff; padding: 0 2px; }
.txt:disabled { background: #d3d5d7; border-color: #b4b9bd; color: #777; }
.field { position: relative; display: flex; }
.textcaret { position: absolute; left: 14px; top: 3px; width: 1px; height: 11px; background: #000; }
.spin { display: flex; flex-direction: column; gap: 1px; margin-left: 3px; }
.spin button { width: 12px; height: 8px; display: flex; align-items: center; justify-content: center; background: #f8f8f8; }
.spin svg { width: 5px; height: 4px; }
.up { transform: scaleY(-1); }
.chk { display: flex; align-items: center; gap: 4px; height: 14px; }
.chk input { appearance: none; width: 10px; height: 10px; border: 1px solid #9a9a9a; background: #e6e6e6; }
.chk input:checked { border-color: #5a8fbb; background: #dcecf8; display: grid; place-content: center; }
.chk input:checked::after { content: ""; width: 3px; height: 6px; margin-bottom: 2px; border: solid #0a2a78; border-width: 0 2px 2px 0; transform: rotate(40deg); }
.in { margin: 6px 0 3px 27px; gap: 3px; }
.custom { display: flex; align-items: center; justify-content: space-between; margin: 0 4px 0 2px; padding: 3px 2px 0 3px; border-top: 1px solid #a9a9a9; }
.tip { position: absolute; left: 110px; top: 213px; z-index: 4; padding: 1px; background: #fbfbfb; border: 1px solid #777; border-radius: 2px; box-shadow: 1px 1px 1px #9999; line-height: 14px; color: #444; white-space: nowrap; }
.handle { position: absolute; left: 190px; top: 223px; width: 8px; height: 22px; background: #f3f3f3; border: 1px solid #aaa; border-width: 0 1px 1px 0; z-index: 3; }

/* graphics area */
.view { position: relative; flex: 1; min-width: 0; background: #fdfdfd; }
.scene { width: 100%; height: 100%; }
.mark { font: bold 20px "Open Sans", sans-serif; fill: #666a90; fill-opacity: .18; }
.dimtext { font: italic bold 9px "Liberation Sans", sans-serif; }
.axis { font: bold 9px "Liberation Serif", serif; }
.tree { position: absolute; left: 2px; top: 4px; display: flex; align-items: center; gap: 4px; }
.tree span { font-size: 6px; width: 9px; }
.hud { position: absolute; left: 237px; top: 2px; display: flex; align-items: center; }
.hud .cb { width: 12px; }
.confirm { position: absolute; top: 26px; right: 25px; display: flex; gap: 12px; align-items: flex-start; }
.confirm button { width: 24px; height: 20px; }
.confirm svg { width: 24px; height: 20px; }
.confirm .no { margin-top: 24px; width: 20px; }
.confirm .no svg { width: 20px; }
.taskpane { position: absolute; right: 0; top: 22px; width: 19px; border: 1px solid #888; border-right: 0; background: #cdcdcd; display: flex; flex-direction: column; }
.taskpane button { height: 19px; display: flex; align-items: center; justify-content: center; border-bottom: 1px solid #999; }
.taskpane button:last-child { border-bottom: 0; }
.taskpane .on { background: #f8f8f8; }

/* sheet tabs and status line */
.sheets { display: flex; height: 13px; flex: none; background: #f3f3f3; border-top: 1px solid #999; border-bottom: 1px solid #999; }
.sheets > button { padding: 0 5px; line-height: 10px; background: #d2d2d2; border-right: 1px solid #999; }
.sheets > .on { background: #f6f6f6; padding: 0 8px; }
.vcr { display: flex; width: 52px; background: #b9b9b9; color: #888; }
.vcr button { flex: 1; font-size: 8px; line-height: 10px; border-right: 1px solid #999; overflow: hidden; }
.status { display: flex; height: 12px; flex: none; line-height: 12px; white-space: nowrap; }
.msg { flex: 1; }
.cell { border-right: 1px solid #ccc; flex: none; display: flex; align-items: center; }
.s1 { width: 36px; }
.s2 { width: 70px; padding-left: 7px; }
.s3 { width: 12px; }
.s4 { width: 84px; padding-left: 22px; color: #999; gap: 14px; border: 0; }
.s4 svg { width: 5px; height: 4px; }
.s5 { width: 65px; padding-left: 36px; border: 0; gap: 8px; }
.tagicon { width: 14px; height: 12px; }
.grip { width: 8px; height: 10px; }
```
